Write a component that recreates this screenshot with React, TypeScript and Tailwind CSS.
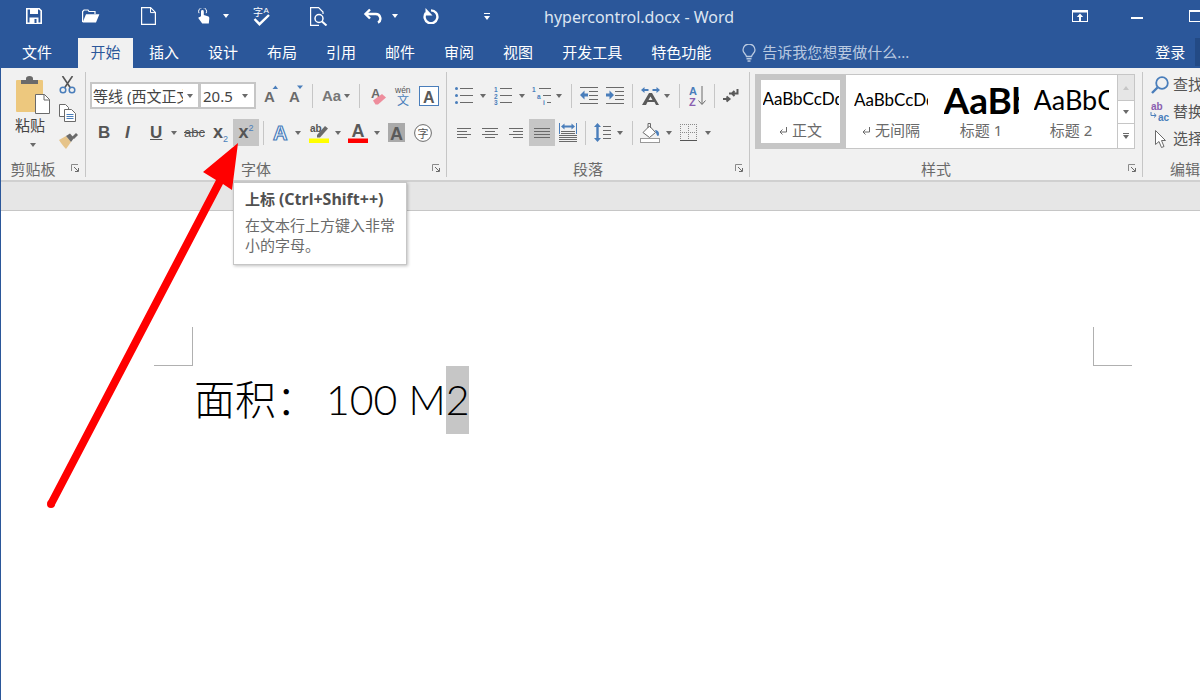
const GRAY = "#6a6a6a";
const BLUE = "#4a7ebb";

const Caret = ({ className = "" }: { className?: string }) => (
  <span className={`flex-none w-0 h-0 border-x-[3px] border-x-transparent border-t-[4px] border-t-[#6a6a6a] ${className}`} />
);

const Sep = ({ className = "" }: { className?: string }) => (
  <span className={`flex-none w-px h-[24px] bg-[#c6c6c6] ${className}`} />
);

const Launcher = () => (
  <svg width="8" height="8" viewBox="0 0 8 8" className="absolute right-[6px] top-[1px]">
    <path d="M.5 7V.5H7" stroke="#8a8a8a" fill="none" />
    <path d="M3 3l4 4M7.5 4v3.5H4" stroke="#6a6a6a" fill="none" />
  </svg>
);

const Group = ({ className, label, children }: { className: string; label: string; children: React.ReactNode }) => (
  <div className={`flex-none flex flex-col h-[105px] border-r border-[#c6c6c6] ${className}`}>
    <div className="flex-1 min-h-0">{children}</div>
    <div className="relative h-[14px] leading-[13px] text-center pr-[20px] text-[15px] text-[#6a6a6a]">
      {label}
      <Launcher />
    </div>
  </div>
);

const Lines = ({ rows }: { rows: [number, number, number][] }) => (
  <>
    {rows.map(([x, y, l], i) => (
      <rect key={i} x={x} y={y} width={l} height="1" fill={GRAY} />
    ))}
  </>
);

const LetterA = ({ x = 0, y = 15, size = 18, fill = "#5a5a5a" }: { x?: number; y?: number; size?: number; fill?: string }) => (
  <text x={x} y={y} fontSize={size} fontWeight="700" fontFamily="Liberation Sans" fill={fill}>A</text>
);

const TitleBar = () => (
  <div className="h-[38px] flex-none bg-[#2b579a] flex items-center pb-[6px]">
    <svg width="16" height="16" viewBox="0 0 16 16" className="flex-none ml-[26px]">
      <path d="M.8.8h12.4l2 2v12.4H.8z" fill="none" stroke="#fff" strokeWidth="1.6" />
      <rect x="4" y="1" width="8" height="5" fill="#fff" />
      <path d="M3.5 9.500h9V15h-9z" fill="#fff" />
      <rect x="8.500" y="11" width="2" height="4" fill="#2b579a" />
    </svg>
    <svg width="18" height="14" viewBox="0 0 18 14" className="flex-none ml-[40px]">
      <path d="M.6 13V2.500L2 1h4l1 1.500h6V5" fill="none" stroke="#fff" strokeWidth="1.2" />
      <path d="M.6 13.400L4 5.200h13.400L14 13.400z" fill="#fff" />
    </svg>
    <svg width="15" height="18" viewBox="0 0 15 18" className="flex-none ml-[41px]">
      <path d="M.6.6h9l4.800 4.800v12H.6z" fill="none" stroke="#fff" strokeWidth="1.2" />
      <path d="M9.500.6v5h5" fill="none" stroke="#fff" strokeWidth="1" />
    </svg>
    <svg width="13" height="17" viewBox="0 0 13 17" className="flex-none ml-[41px]">
      <path d="M4 8V3.400a1.400 1.400 0 0 1 2.800 0V7l4 1.200c1 .3 1.700 1 1.500 2.200L11.800 15.500H5.200L1.600 10.500c-.7-.9.5-2 1.400-1.400z" fill="#fff" />
      <path d="M2 5.200a4 4 0 1 1 7.200 0" fill="none" stroke="#fff" />
    </svg>
    <span className="flex-none ml-[13px] w-0 h-0 border-x-[3px] border-x-transparent border-t-[4px] border-t-white" />
    <svg width="18" height="20" viewBox="0 0 18 20" className="flex-none ml-[24px] overflow-visible">
      <text x="0" y="10" fontSize="10" fill="#fff" fontFamily="Noto Sans CJK SC">字</text>
      <text x="10.500" y="7" fontSize="8" fill="#fff" fontFamily="Liberation Sans">A</text>
      <path d="M1.500 13l5 5.200L16 9" fill="none" stroke="#fff" strokeWidth="2.4" />
    </svg>
    <svg width="18" height="19" viewBox="0 0 18 19" className="flex-none ml-[39px]">
      <path d="M9 18.400H.6V.6h8l4.400 4.400v2" fill="none" stroke="#fff" strokeWidth="1.2" />
      <circle cx="9" cy="11.500" r="4" fill="none" stroke="#fff" strokeWidth="1.5" />
      <path d="M12 14.500l4.500 4" stroke="#fff" strokeWidth="2" />
    </svg>
    <svg width="19" height="16" viewBox="0 0 19 16" className="flex-none ml-[35px]">
      <path d="M7 1.500L2.500 6 7 10.500" fill="none" stroke="#fff" strokeWidth="2.4" />
      <path d="M3 6h9.500a4.600 4.600 0 0 1 2.500 8.600" fill="none" stroke="#fff" strokeWidth="2.4" />
    </svg>
    <span className="flex-none ml-[10px] w-0 h-0 border-x-[3px] border-x-transparent border-t-[4px] border-t-white" />
    <svg width="16" height="16" viewBox="0 0 16 16" className="flex-none ml-[25px]">
      <path d="M8 2.400a6.400 6.400 0 1 1-5 2.400" fill="none" stroke="#fff" strokeWidth="2.4" />
      <path d="M2.500 0v7.500h7z" fill="#fff" />
    </svg>
    <span className="flex-none ml-[45px] flex flex-col items-center gap-[2px]">
      <span className="w-[6px] h-px bg-white" />
      <span className="w-0 h-0 border-x-[3px] border-x-transparent border-t-[4px] border-t-white" />
    </span>
    <span className="flex-none ml-[54px] w-[190px] text-[16px] leading-[22px] mt-[2px] text-[#dde5f1] whitespace-nowrap">hypercontrol.docx - Word</span>
    <svg width="16" height="12" viewBox="0 0 16 12" className="flex-none ml-[338px]">
      <rect x=".5" y=".5" width="15" height="11" fill="none" stroke="#fff" />
      <rect x="1" y="1" width="14" height="1.5" fill="#fff" />
      <path d="M8 3.500L4.800 7h2.200v4h2V7h2.200z" fill="#fff" />
    </svg>
    <span className="flex-none ml-[43px] mt-[4px] w-[12px] h-[2px] bg-white" />
    <span className="flex-none ml-[46px] w-[14px] h-[12px] border border-white border-t-2" />
  </div>
);

const tabs = ["插入", "设计", "布局", "引用", "邮件", "审阅", "视图", "开发工具", "特色功能"];

const TabBar = () => (
  <div className="h-[30px] flex-none bg-[#2b579a] flex text-[15px] leading-[28px] text-white whitespace-nowrap">
    <span className="ml-[22px] w-[30px]">文件</span>
    <span className="ml-[26px] w-[57px] text-center bg-[#f1f1f1] text-[#2b579a]">开始</span>
    <div className="ml-[16px] flex gap-[29px]">
      {tabs.map((t) => (
        <span key={t}>{t}</span>
      ))}
    </div>
    <svg width="14" height="18" viewBox="0 0 14 18" className="flex-none ml-[31px] mt-[6px]">
      <path d="M4.500 12.500C4 10 1 9 1 6a6 6 0 0 1 12 0c0 3-3 4-3.500 6.500z" fill="none" stroke="#b9c9e0" strokeWidth="1.3" />
      <rect x="4.500" y="14" width="5" height="1.5" fill="#b9c9e0" />
      <rect x="5.500" y="16.300" width="3" height="1.5" fill="#b9c9e0" />
    </svg>
    <span className="ml-[6px] w-[147px] text-[#b9c9e0]">告诉我您想要做什么...</span>
    <span className="ml-[246px]">登录</span>
    <span className="ml-[10px] w-[5px] h-[28px] bg-[#234a85]" />
  </div>
);

const ClipboardGroup = () => (
  <Group className="w-[85px]" label="剪贴板">
    <div className="flex">
      <div className="w-[58px] flex-none flex flex-col">
        <svg width="35" height="38" viewBox="0 0 35 38" className="flex-none ml-[15px] mt-[4px]">
          <rect x="0" y="4" width="27" height="32" rx="1" fill="#edc87e" />
          <path d="M5 8V4h5V2.500a3.500 2.500 0 0 1 7 0V4h5v4z" fill={GRAY} />
          <path d="M19.500 18.500h9l5 5v14h-14z" fill="#fff" stroke={GRAY} />
          <path d="M28 18.500v5.500h5.500" fill="none" stroke={GRAY} />
        </svg>
        <span className="ml-[14px] text-[15px] leading-[22px] text-[#444]">粘贴</span>
        <Caret className="ml-[29px] mt-[7px]" />
      </div>
      <div className="flex flex-col">
        <svg width="17" height="18" viewBox="0 0 17 18" className="flex-none mt-[4px]">
          <path d="M3.500 0l8 12M13.500 0l-8 12" stroke="#555" strokeWidth="1.6" />
          <circle cx="4" cy="14" r="2.800" fill="none" stroke={BLUE} strokeWidth="1.5" />
          <circle cx="13" cy="14" r="2.800" fill="none" stroke={BLUE} strokeWidth="1.5" />
        </svg>
        <svg width="17" height="18" viewBox="0 0 17 18" className="flex-none mt-[10px]">
          <path d="M.5.500h6l3 3v9h-9z" fill="#fff" stroke={GRAY} />
          <path d="M5.500 5.500h7l4 4v8h-11z" fill="#fff" stroke={GRAY} />
          <path d="M7.500 10.500h7M7.500 12.500h7M7.500 14.500h7" stroke={BLUE} />
        </svg>
        <svg width="19" height="16" viewBox="0 0 19 16" className="flex-none mt-[11px]">
          <path d="M0 7l7-4 5 6-5 7C5 14 2 10 0 7z" fill="#e6c48a" />
          <path d="M7 3l4-2.500 4 4.500-3 4z" fill={GRAY} />
          <path d="M13 4l4-4 2 2-4 4z" fill={GRAY} />
        </svg>
      </div>
    </div>
  </Group>
);

const FontGroup = () => (
  <Group className="w-[361px]" label="字体">
    <div className="flex items-center h-[27px] mt-[10px] pl-[4px]">
      <div className="flex-none w-[110px] h-[27px] bg-white border-2 border-[#c6c6c6] flex items-center pl-[1px] pr-[5px] text-[15px] text-[#444]">
        <span className="flex-1 overflow-hidden whitespace-nowrap leading-[22px] mr-[4px]">等线 (西文正文)</span>
        <Caret />
      </div>
      <div className="flex-none -ml-px w-[57px] h-[27px] bg-white border-2 border-[#c6c6c6] flex items-center justify-between pl-[2px] pr-[6px] text-[15px] text-[#444]">
        <span className="leading-[22px]">20.5</span>
        <Caret />
      </div>
      <svg width="14" height="18" viewBox="0 0 14 18" className="flex-none ml-[8px] -mt-[3px] overflow-visible">
        <LetterA y={17} size={15} fill={GRAY} />
        <path d="M8.500 4l3-3.500 2.500 3.500z" fill={BLUE} />
      </svg>
      <svg width="14" height="18" viewBox="0 0 14 18" className="flex-none ml-[11px] -mt-[3px] overflow-visible">
        <LetterA y={17} size={15} fill={GRAY} />
        <path d="M8 .5h6l-3 3.500z" fill={BLUE} />
      </svg>
      <Sep className="ml-[9px]" />
      <span className="flex-none ml-[9px] w-[17px] text-[15px] font-['Liberation_Sans'] text-[#777] font-bold leading-none whitespace-nowrap">Aa</span>
      <Caret className="ml-[5px]" />
      <Sep className="ml-[9px]" />
      <svg width="16" height="18" viewBox="0 0 16 18" className="flex-none ml-[11px] overflow-visible">
        <LetterA y={11} size={13} fill={GRAY} />
        <path d="M2 13.500L11 7l4 3.500-8 7H4.500z" fill="#ee8d9c" />
      </svg>
      <svg width="15" height="21" viewBox="0 0 15 21" className="flex-none ml-[8px] overflow-visible">
        <text x="0" y="8" fontSize="8.5" fontFamily="Liberation Sans" fill="#555">wén</text>
        <text x="2" y="20" fontSize="12" fontFamily="Noto Sans CJK SC" fill={BLUE}>文</text>
      </svg>
      <div className="flex-none ml-[9px] w-[20px] h-[20px] border border-[#4a7ebb] bg-white flex items-center justify-center">
        <svg width="14" height="14" viewBox="0 0 14 14" className="overflow-visible">
          <LetterA x={1} y={13.5} size={16} />
        </svg>
      </div>
    </div>
    <div className="flex items-center h-[27px] mt-[10px] text-[#555] font-['Liberation_Sans'] font-bold">
      <span className="flex-none ml-[12px] w-[10px] text-[17px]">B</span>
      <span className="flex-none ml-[17px] w-[9px] text-[17px] italic">I</span>
      <span className="flex-none ml-[16px] w-[11px] text-[17px] underline">U</span>
      <Caret className="ml-[10px]" />
      <span className="flex-none ml-[7px] w-[20px] text-[13px] font-normal line-through leading-none">abc</span>
      <span className="flex-none ml-[9px] w-[15px] text-[18px] whitespace-nowrap">x<sub className="text-[9px] font-normal text-[#4a7ebb] align-[-2px]">2</sub></span>
      <span className="flex-none ml-[5px] w-[26px] h-[27px] bg-[#c6c6c6] flex items-center justify-center text-[18px] whitespace-nowrap">x<sup className="text-[9px] font-normal text-[#4a7ebb] align-[6px]">2</sup></span>
      <Sep className="ml-[4px]" />
      <svg width="16" height="18" viewBox="0 0 16 18" className="flex-none ml-[9px] overflow-visible">
        <text x="0" y="16" fontSize="20" fontWeight="700" fontFamily="Liberation Sans" fill="#fff" stroke="#4a7ebb" strokeWidth="1.2">A</text>
      </svg>
      <Caret className="ml-[6px]" />
      <svg width="20" height="20" viewBox="0 0 20 20" className="flex-none ml-[8px] overflow-visible">
        <text x="1" y="9" fontSize="10" fontFamily="Liberation Sans" fill="#555">ab</text>
        <path d="M8 12l8-9 3 2.500-8 9H8z" fill={GRAY} />
        <rect x="0" y="15.5" width="20" height="4.5" fill="#ffff00" />
      </svg>
      <Caret className="ml-[6px]" />
      <svg width="20" height="20" viewBox="0 0 20 20" className="flex-none ml-[7px] overflow-visible">
        <LetterA x={3.5} y={14} size={18} />
        <rect x="0" y="15.5" width="20" height="4.5" fill="#ff0000" />
      </svg>
      <Caret className="ml-[6px]" />
      <span className="flex-none ml-[8px] w-[17px] h-[19px] bg-[#aaaaaa] flex items-center justify-center">
        <svg width="15" height="15" viewBox="0 0 15 15" className="overflow-visible">
          <LetterA x={1} y={14.5} size={18} />
        </svg>
      </span>
      <svg width="18" height="18" viewBox="0 0 18 18" className="flex-none ml-[9px]">
        <circle cx="9" cy="9" r="8.4" fill="#fff" stroke={GRAY} />
        <text x="3.5" y="13.5" fontSize="11" fontWeight="400" fontFamily="Noto Sans CJK SC" fill="#555">字</text>
      </svg>
    </div>
  </Group>
);

const numStyle = { fontSize: 6.5, fontWeight: 700, fontFamily: "Liberation Sans", fill: BLUE };

const ParagraphGroup = () => (
  <Group className="w-[303px]" label="段落">
    <div className="flex items-center h-[27px] mt-[10px]">
      <svg width="18" height="19" viewBox="0 0 18 19" className="flex-none ml-[8px]">
        <Lines rows={[[5, 2, 13], [5, 9, 13], [5, 16, 13]]} />
        <circle cx="1.5" cy="2.5" r="1.5" fill={BLUE} />
        <circle cx="1.5" cy="9.5" r="1.5" fill={BLUE} />
        <circle cx="1.5" cy="16.5" r="1.5" fill={BLUE} />
      </svg>
      <Caret className="ml-[7px]" />
      <svg width="18" height="19" viewBox="0 0 18 19" className="flex-none ml-[8px] overflow-visible">
        <Lines rows={[[6, 2, 12], [6, 9, 12], [6, 16, 12]]} />
        <text x="0" y="6" {...numStyle}>1</text>
        <text x="0" y="12.5" {...numStyle}>2</text>
        <text x="0" y="19" {...numStyle}>3</text>
      </svg>
      <Caret className="ml-[7px]" />
      <svg width="19" height="19" viewBox="0 0 19 19" className="flex-none ml-[7px] overflow-visible">
        <Lines rows={[[7, 2, 12], [11, 9, 8], [15, 16, 4]]} />
        <text x="0" y="6" {...numStyle}>1</text>
        <text x="5" y="12.5" {...numStyle}>a</text>
        <text x="11" y="19" {...numStyle}>i</text>
      </svg>
      <Caret className="ml-[5px]" />
      <Sep className="ml-[9px]" />
      <svg width="18" height="17" viewBox="0 0 18 17" className="flex-none ml-[8px]">
        <Lines rows={[[0, 0, 18], [9, 4, 9], [9, 8, 9], [9, 12, 9], [0, 16, 18]]} />
        <path d="M0 8l4.500-4.500V6.500H8v3H4.500v3z" fill={BLUE} />
      </svg>
      <svg width="18" height="17" viewBox="0 0 18 17" className="flex-none ml-[8px]">
        <Lines rows={[[0, 0, 18], [9, 4, 9], [9, 8, 9], [9, 12, 9], [0, 16, 18]]} />
        <path d="M8 8L3.500 3.500V6.500H0v3h3.500v3z" fill={BLUE} />
      </svg>
      <Sep className="ml-[8px]" />
      <svg width="19" height="18" viewBox="0 0 19 18" className="flex-none ml-[8px]">
        <path d="M0 3l3.500-3v2h4v2h-4v2zM19 3l-3.500-3v2h-4v2h4v2z" fill={BLUE} />
        <path d="M1 18L8 6h3l7 12h-3l-1.500-3h-7L5 18zM7.500 13h4L9.500 9.500z" fill="#5a5a5a" />
      </svg>
      <Caret className="ml-[4px]" />
      <Sep className="ml-[9px]" />
      <svg width="17" height="20" viewBox="0 0 17 20" className="flex-none ml-[9px] overflow-visible">
        <text x="0" y="9" fontSize="11" fontWeight="700" fontFamily="Liberation Sans" fill={BLUE}>A</text>
        <text x="0" y="19.5" fontSize="11" fontWeight="700" fontFamily="Liberation Sans" fill="#8a5fb0">Z</text>
        <path d="M13 0v18M9.500 14.500L13 18.500l3.500-4" fill="none" stroke={GRAY} />
      </svg>
      <Sep className="ml-[8px]" />
      <svg width="16" height="14" viewBox="0 0 16 14" className="flex-none ml-[8px]">
        <path d="M6 4.500h8.500V0M9 4.500L11.500 2M9 4.500L11.500 7" fill="none" stroke="#5a5a5a" strokeWidth="2" />
        <path d="M0 10h6M3.500 7.500L6.500 10l-3 2.500" fill="none" stroke="#5a5a5a" strokeWidth="2" />
      </svg>
    </div>
    <div className="flex items-center h-[27px] mt-[10px]">
      <svg width="14" height="10" viewBox="0 0 14 10" className="flex-none ml-[10px]">
        <Lines rows={[[0, 0, 14], [0, 3, 10], [0, 6, 14], [0, 9, 10]]} />
      </svg>
      <svg width="16" height="10" viewBox="0 0 16 10" className="flex-none ml-[11px]">
        <Lines rows={[[0, 0, 16], [3, 3, 10], [0, 6, 16], [3, 9, 10]]} />
      </svg>
      <svg width="14" height="10" viewBox="0 0 14 10" className="flex-none ml-[11px]">
        <Lines rows={[[0, 0, 14], [4, 3, 10], [0, 6, 14], [4, 9, 10]]} />
      </svg>
      <span className="flex-none ml-[6px] w-[26px] h-[27px] bg-[#c6c6c6] flex items-center justify-center">
        <svg width="16" height="10" viewBox="0 0 16 10">
          <Lines rows={[[0, 0, 16], [0, 3, 16], [0, 6, 16], [0, 9, 16]]} />
        </svg>
      </span>
      <svg width="18" height="19" viewBox="0 0 18 19" className="flex-none ml-[4px]">
        <path d="M.5 0v11M17.500 0v11" stroke={BLUE} />
        <path d="M2 3.500L5.500.5v2h7v-2l3.500 3-3.500 3v-2h-7v2z" fill={BLUE} />
        <Lines rows={[[2, 8, 14], [2, 10, 14], [0, 12, 18], [0, 14, 18], [0, 16, 18], [0, 18, 18]]} />
      </svg>
      <Sep className="ml-[8px]" />
      <svg width="17" height="19" viewBox="0 0 17 19" className="flex-none ml-[8px]">
        <path d="M3.500 0l3.500 4H4.700v11H7l-3.500 4L0 15h2.300V4H0z" fill={BLUE} />
        <Lines rows={[[9, 3, 8], [9, 7, 8], [9, 11, 8], [9, 15, 8]]} />
      </svg>
      <Caret className="ml-[6px]" />
      <Sep className="ml-[9px]" />
      <svg width="20" height="20" viewBox="0 0 20 20" className="flex-none ml-[7px]">
        <path d="M3 9.500L9.500 3l6 6.500-6 5z" fill="#fff" stroke={GRAY} />
        <path d="M8 5V.5h2.500V5" fill="none" stroke={GRAY} />
        <path d="M15 7c2 0 4 1 4 4 0 1-.5 2-1 2-1 0-1.500-2-3-6z" fill={BLUE} />
        <rect x=".5" y="15.5" width="19" height="4" fill="#fff" stroke="#9a9a9a" />
      </svg>
      <Caret className="ml-[6px]" />
      <svg width="17" height="17" viewBox="0 0 17 17" className="flex-none ml-[8px]">
        <path d="M.5 0v16M8.500 0v16M16.500 0v16M0 .5h17M0 8.500h17" stroke="#8a8a8a" strokeDasharray="1 1" fill="none" />
        <rect x="0" y="16" width="17" height="1" fill="#555" />
      </svg>
      <Caret className="ml-[8px]" />
    </div>
  </Group>
);

const ReturnMark = () => (
  <svg width="8" height="9" viewBox="0 0 8 9" className="mr-[5px] mt-[2px]">
    <path d="M7.500 0v5H1M3.500 2.500L1 5l2.500 2.500" fill="none" stroke={GRAY} />
  </svg>
);

const StyleItem = ({ previewClass, text, label, mark }: { previewClass: string; text: string; label: string; mark?: boolean }) => (
  <div className="flex-none w-[90px] flex flex-col items-center">
    <div className={`h-[40px] mt-[5px] flex items-center overflow-hidden whitespace-nowrap text-black font-['Lato'] ${previewClass}`}>{text}</div>
    <div className="flex items-center h-[20px] text-[15px] leading-[20px] text-[#6a6a6a] whitespace-nowrap">
      {mark && <ReturnMark />}
      {label}
    </div>
  </div>
);

const StylesGroup = () => (
  <Group className="w-[393px]" label="样式">
    <div className="ml-[5px] mt-[2px] w-[380px] h-[75px] bg-white border border-[#c6c6c6] flex">
      <div className="flex-none w-[91px] h-[75px] -mt-px -ml-px border-[6px] border-[#c6c6c6] flex flex-col items-center">
        <div className="w-[76px] h-[40px] -mt-[1px] flex items-center overflow-hidden whitespace-nowrap text-[17px] text-black font-['Lato']">AaBbCcDd</div>
        <div className="flex items-center h-[20px] mt-[1px] text-[15px] text-[#6a6a6a]">
          <ReturnMark />
          正文
        </div>
      </div>
      <StyleItem previewClass="w-[74px] text-[17px]" text="AaBbCcDd" label="无间隔" mark />
      <StyleItem previewClass="w-[75px] text-[37px] font-bold" text="AaBbCc" label="标题 1" />
      <StyleItem previewClass="w-[75px] text-[27px]" text="AaBbCc" label="标题 2" />
      <div className="flex-none w-[17px] ml-[1px] flex flex-col border-l border-[#c6c6c6]">
        <div className="h-[25px] bg-[#e6e6e6] flex items-center justify-center">
          <span className="w-0 h-0 border-x-[3px] border-x-transparent border-b-[4px] border-b-[#c6c6c6]" />
        </div>
        <div className="h-[24px] border-y border-[#c6c6c6] flex items-center justify-center">
          <Caret />
        </div>
        <div className="h-[24px] flex flex-col items-center justify-center gap-[1px]">
          <span className="w-[6px] h-px bg-[#6a6a6a]" />
          <Caret />
        </div>
      </div>
    </div>
  </Group>
);

const EditingGroup = () => (
  <div className="flex-none w-[57px] h-[105px] flex flex-col text-[15px] text-[#555] whitespace-nowrap overflow-hidden">
    <div className="flex-1 flex flex-col">
      <div className="flex items-center h-[27px] -mt-[1px]">
        <svg width="18" height="18" viewBox="0 0 18 18" className="flex-none ml-[8px]">
          <circle cx="11" cy="7" r="5.800" fill="none" stroke={BLUE} strokeWidth="1.8" />
          <path d="M6.500 11.500L1 17" stroke={BLUE} strokeWidth="2.4" />
        </svg>
        <span className="ml-[4px]">查找</span>
      </div>
      <div className="flex items-center h-[27px]">
        <svg width="20" height="20" viewBox="0 0 20 20" className="flex-none ml-[7px] overflow-visible">
          <text x="1" y="8" fontSize="10" fontFamily="Liberation Sans" fontWeight="700" fill="#8a5fb0">ab</text>
          <text x="8" y="19" fontSize="10" fontFamily="Liberation Sans" fontWeight="700" fill={BLUE}>ac</text>
          <path d="M1 10v3.500h5M4 11.500l2.200 2-2.200 2" fill="none" stroke={BLUE} />
        </svg>
        <span className="ml-[3px]">替换</span>
      </div>
      <div className="flex items-center h-[27px]">
        <svg width="11" height="18" viewBox="0 0 11 18" className="flex-none ml-[12px]">
          <path d="M.5.500v14l3.500-3 2.500 6 2.500-1-2.500-6H10.500z" fill="#fff" stroke={GRAY} />
        </svg>
        <span className="ml-[7px]">选择</span>
      </div>
    </div>
    <div className="h-[14px] leading-[13px] text-[#6a6a6a] pl-[27px]">编辑</div>
  </div>
);

const Ribbon = () => (
  <div className="h-[114px] flex-none bg-[#f1f1f1] border-b-2 border-[#d0d0d0] pt-[4px] flex">
    <ClipboardGroup />
    <FontGroup />
    <ParagraphGroup />
    <StylesGroup />
    <EditingGroup />
  </div>
);

const Document = () => (
  <div className="flex-1 bg-white pt-[116px]">
    <div className="flex justify-between pl-[153px] pr-[68px]">
      <div className="w-[39px] h-[39px] border-r border-b border-[#b0b0b0]" />
      <div className="w-[39px] h-[39px] border-l border-b border-[#b0b0b0]" />
    </div>
    <div className="ml-[193px] text-[41px] leading-[68px] text-black font-light whitespace-nowrap font-['Lato','Noto_Sans_CJK_SC',sans-serif]">
      <span>{"面积\uFF1A"}</span>
      <span className="ml-[9px]">100 M</span>
      <span className="bg-[#c6c6c6] inline-block">2</span>
    </div>
  </div>
);

export default function App() {
  return (
    <div className="relative w-[1200px] h-[700px] overflow-hidden bg-white flex flex-col font-['Noto_Sans','Noto_Sans_CJK_SC',sans-serif]">
      <TitleBar />
      <TabBar />
      <div className="flex-1 flex flex-col border-l border-[#2b579a]">
        <Ribbon />
        <div className="h-[29px] flex-none bg-[#e6e6e6] border-b border-[#c6c6c6]" />
        <Document />
      </div>

      {/* red arrow drawn over the screenshot */}
      <svg width="1200" height="700" viewBox="0 0 1200 700" className="absolute inset-0 pointer-events-none">
        <path d="M238 143L203 172 216 180 47.500 502.200 54.500 505.800 223 184 232 190z" fill="#ff0000" />
        <circle cx="51" cy="504" r="4" fill="#ff0000" />
      </svg>

      <div className="absolute left-[233px] top-[182px] w-[174px] h-[83px] bg-white border border-[#c6c6c6] shadow-[1px_1px_3px_rgba(0,0,0,0.25)] pl-[11px] pt-[6px] text-[15px]">
        <div className="leading-[20px] font-bold text-[#505050] whitespace-nowrap">
          上标 <span className="text-[16px]">(Ctrl+Shift++)</span>
        </div>
        <div className="mt-[6px] leading-[20px] text-[#6a6a6a] w-[152px]">在文本行上方键入非常小的字母。</div>
      </div>
    </div>
  );
}
